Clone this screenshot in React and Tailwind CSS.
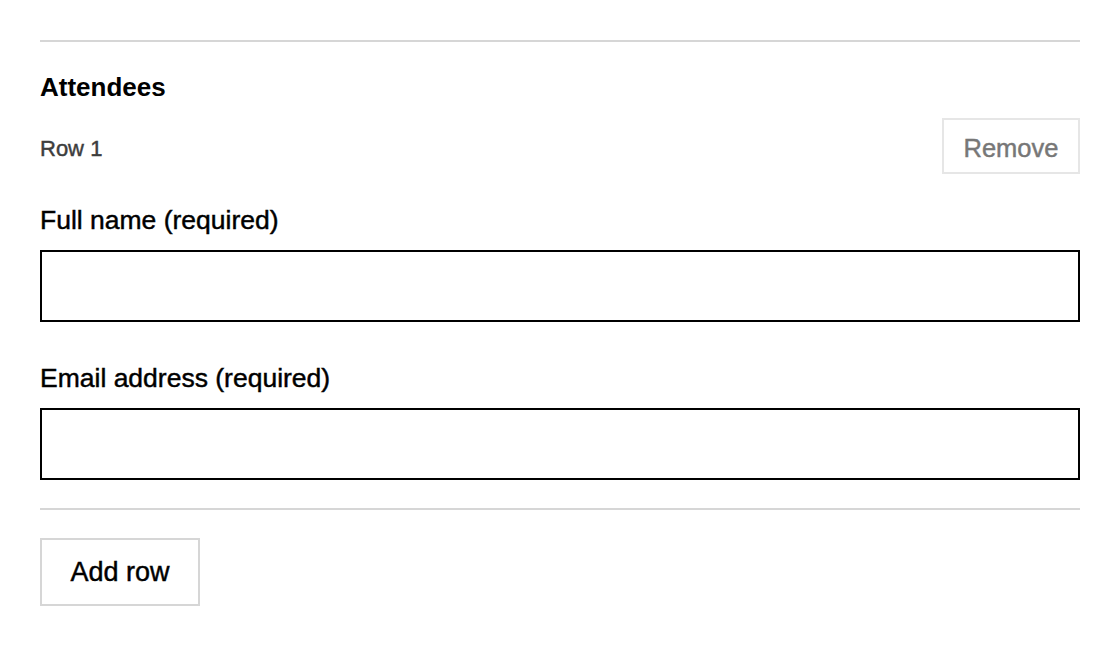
import React, { useState } from "react";

const font = { fontFamily: '"Liberation Sans", Arial, sans-serif' };

// Liberation has no medium cut, so a hairline stroke thickens the regular face
const medium = "[-webkit-text-stroke:0.45px_currentColor]";

const Field = ({ label, type = "text" }) => (
  <label className="block">
    <span className={`block text-[26.5px] leading-[28px] text-black ${medium}`}>
      {label}
    </span>
    <input
      type={type}
      className="mt-[16px] block h-[72px] w-full border-2 border-black bg-white px-3 text-[22px] outline-none"
    />
  </label>
);

const App = () => {
  const [rows] = useState([{ id: 1 }]);

  return (
    <div className="min-h-screen bg-white px-10 pt-10" style={font}>
      <div className="h-[2px] bg-[#d6d6d6]" />
      <h2 className="mt-[30px] text-[26px] font-bold leading-[30px] text-black">
        Attendees
      </h2>

      {rows.map((row) => (
        <div key={row.id}>
          <div className="mt-[16px] flex items-center justify-between">
            <span className={`pt-[5px] text-[22px] text-[#3d3d3d] ${medium}`}>
              Row {row.id}
            </span>
            <button
              className={`h-[56px] w-[138px] border-2 border-[#e6e6e6] bg-white pt-[4px] text-[25.5px] text-[#777] ${medium}`}
            >
              Remove
            </button>
          </div>
          <div className="mt-[32px] flex flex-col gap-[42px]">
            <Field label="Full name (required)" />
            <Field label="Email address (required)" type="email" />
          </div>
        </div>
      ))}

      <div className="mt-[28px] h-[2px] bg-[#d6d6d6]" />
      <button
        className={`mt-[28px] h-[68px] w-[160px] border-2 border-[#d6d6d6] bg-white text-[27px] text-black ${medium}`}
      >
        Add row
      </button>
    </div>
  );
};

export default App;
